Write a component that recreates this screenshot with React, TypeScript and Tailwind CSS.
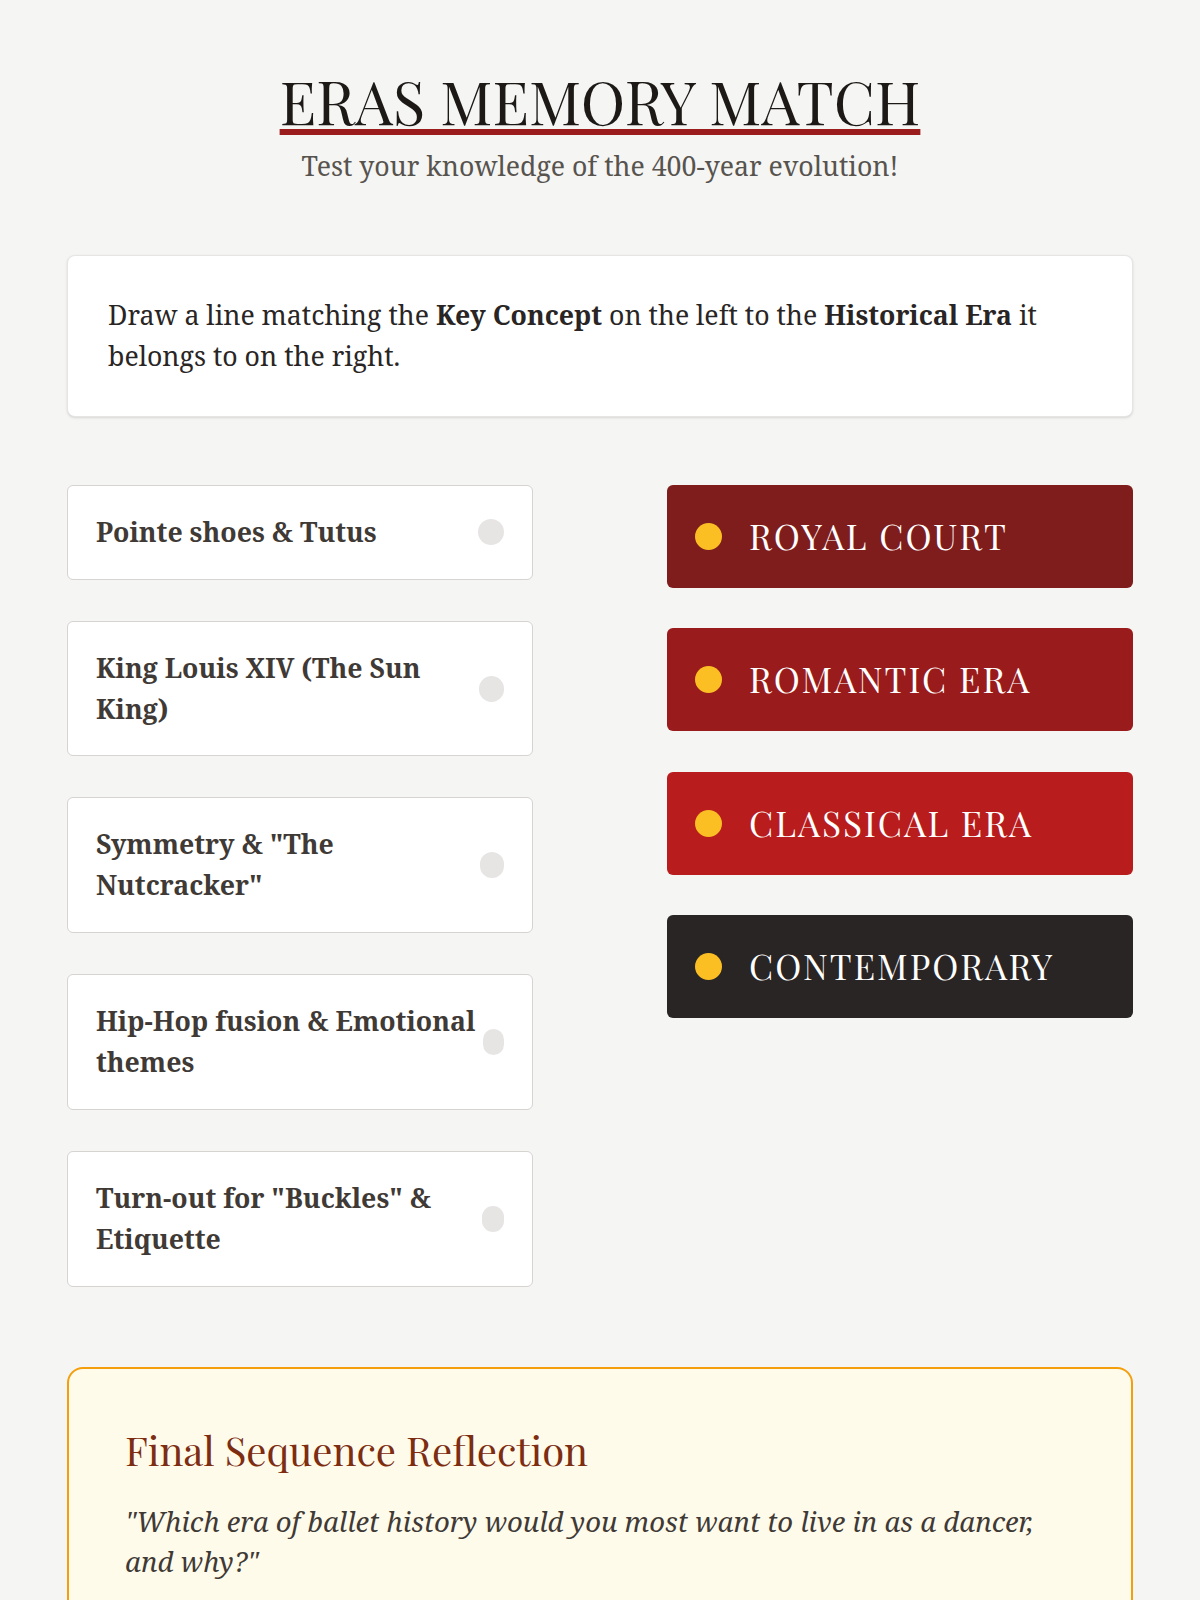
const concepts = [
  'Pointe shoes & Tutus',
  'King Louis XIV (The Sun King)',
  'Symmetry & "The Nutcracker"',
  'Hip-Hop fusion & Emotional themes',
  'Turn-out for "Buckles" & Etiquette',
];

const eras = [
  { name: 'Royal Court', bg: 'bg-[#7f1d1d]' },
  { name: 'Romantic Era', bg: 'bg-[#991b1b]' },
  { name: 'Classical Era', bg: 'bg-[#b91c1c]' },
  { name: 'Contemporary', bg: 'bg-[#292524]' },
];

export default function App() {
  return (
    <div className="min-h-screen bg-[#f5f5f3] font-['Noto_Serif','DejaVu_Serif',serif] text-[#2b2724]">
      <div className="mx-auto w-[1066px] pt-[64px] pb-20">
        {/* Header */}
        <header className="text-center">
          <h1 className="font-['Playfair_Display','Liberation_Serif',serif] text-[60px] leading-[1.2] text-[#1c1917] underline decoration-[#9b1c1c] decoration-[6px] underline-offset-[4px]">
            ERAS MEMORY MATCH
          </h1>
          <p className="mt-[10px] text-[26.7px] leading-[40.9px] text-[#57534e]">
            Test your knowledge of the 400-year evolution!
          </p>
        </header>

        {/* Instructions */}
        <div className="mt-[68px] rounded-lg border border-[#e7e5e4] bg-white px-10 py-[39px] shadow-sm">
          <p className="text-[26.7px] leading-[40.9px] text-[#292524]">
            Draw a line matching the <strong>Key Concept</strong> on the left to the <strong>Historical Era</strong> it
            belongs to on the right.
          </p>
        </div>

        {/* Matching board */}
        <div className="mt-[68px] grid grid-cols-2 items-start gap-x-[134px]">
          <div className="flex flex-col gap-[41px]">
            {concepts.map((c) => (
              <div
                key={c}
                className="flex items-center justify-between rounded-md border border-[#d6d3d1] bg-white px-[28px] py-[26px]"
              >
                <span className="text-[26.7px] font-bold leading-[40.9px] text-[#3f3a36]">{c}</span>
                <span className="h-[26px] w-[26px] rounded-full bg-[#e7e5e4]" />
              </div>
            ))}
          </div>

          <div className="flex flex-col gap-[40.5px]">
            {eras.map((e) => (
              <div key={e.name} className={`flex h-[103px] items-center gap-[27px] rounded-md px-[28px] ${e.bg}`}>
                <span className="h-[27px] w-[27px] shrink-0 rounded-full bg-[#fbbf24]" />
                <span className="font-['Playfair_Display','Liberation_Serif',serif] text-[35.2px] uppercase tracking-[2px] text-white">
                  {e.name}
                </span>
              </div>
            ))}
          </div>
        </div>

        {/* Reflection */}
        <div className="mt-[80px] rounded-2xl border-2 border-[#f59e0b] bg-[#fffbeb] px-[56px] pt-[57px] pb-[56px]">
          <h2 className="font-['Playfair_Display','Liberation_Serif',serif] text-[40px] leading-[1.2] text-[#7c2d12]">
            Final Sequence Reflection
          </h2>
          <p className="mt-[28px] text-[27.5px] italic leading-[40px] text-[#3f3a36]">
            "Which era of ballet history would you most want to live in as a dancer, and why?"
          </p>
        </div>
      </div>
    </div>
  );
}
